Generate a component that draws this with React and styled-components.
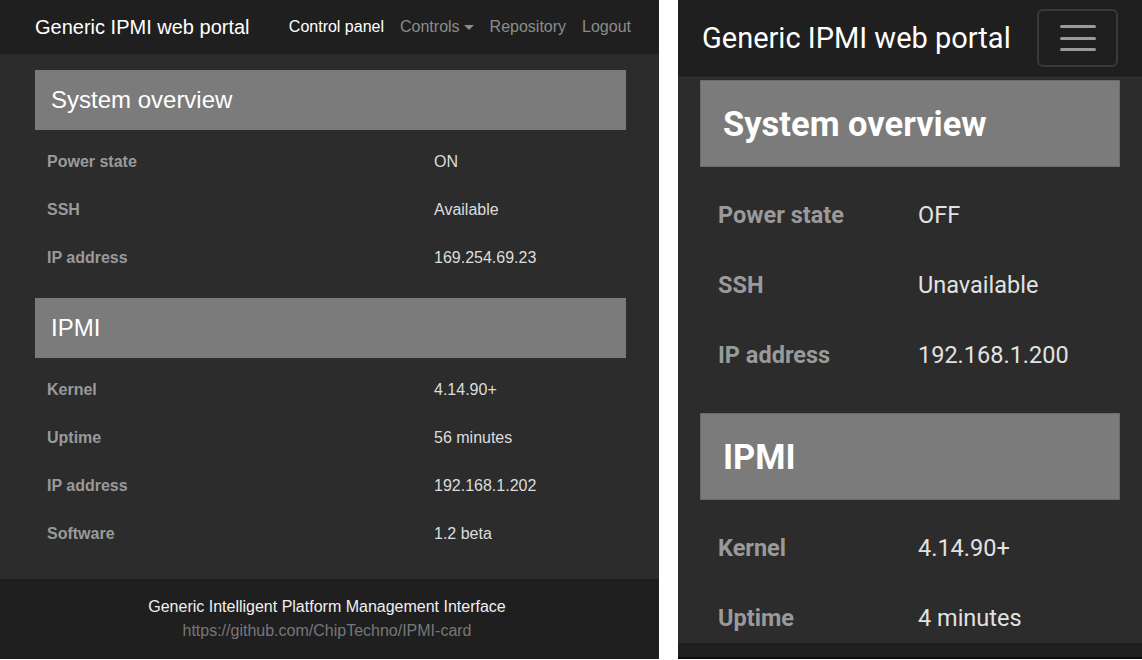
import React from 'react';
import styled, { createGlobalStyle } from 'styled-components';

const GlobalStyle = createGlobalStyle`
  html, body {
    margin: 0;
    padding: 0;
    background: #fff;
  }
  body {
    font-family: "Liberation Sans", Arial, sans-serif;
  }
`;

const systemRows = [
  ['Power state', 'ON'],
  ['SSH', 'Available'],
  ['IP address', '169.254.69.23'],
];

const ipmiRows = [
  ['Kernel', '4.14.90+'],
  ['Uptime', '56 minutes'],
  ['IP address', '192.168.1.202'],
  ['Software', '1.2 beta'],
];

const mobileSystemRows = [
  ['Power state', 'OFF'],
  ['SSH', 'Unavailable'],
  ['IP address', '192.168.1.200'],
];

const mobileIpmiRows = [
  ['Kernel', '4.14.90+'],
  ['Uptime', '4 minutes'],
];

const App = () => {
  return (
    <>
      <GlobalStyle />
      <Page>
        <Desktop>
          <Navbar>
            <Brand>Generic IPMI web portal</Brand>
            <NavLinks>
              <NavLink $active>Control panel</NavLink>
              <NavLink>
                Controls<Caret />
              </NavLink>
              <NavLink>Repository</NavLink>
              <NavLink>Logout</NavLink>
            </NavLinks>
          </Navbar>
          <Main>
            <Section>
              <CardHeader>System overview</CardHeader>
              <Table>
                {systemRows.map(([k, v]) => (
                  <Row key={k}>
                    <Label>{k}</Label>
                    <Value>{v}</Value>
                  </Row>
                ))}
              </Table>
            </Section>
            <Section>
              <CardHeader>IPMI</CardHeader>
              <Table>
                {ipmiRows.map(([k, v]) => (
                  <Row key={k}>
                    <Label>{k}</Label>
                    <Value>{v}</Value>
                  </Row>
                ))}
              </Table>
            </Section>
          </Main>
          <Footer>
            <FooterTitle>Generic Intelligent Platform Management Interface</FooterTitle>
            <FooterLink>https://github.com/ChipTechno/IPMI-card</FooterLink>
          </Footer>
        </Desktop>

        <Mobile>
          <MobileNavbar>
            <MobileBrand>Generic IPMI web portal</MobileBrand>
            <Toggler>
              <TogglerLine />
              <TogglerLine />
              <TogglerLine />
            </Toggler>
          </MobileNavbar>
          <MobileMain>
            <MobileSection>
              <MobileHeader>System overview</MobileHeader>
              <MobileTable>
                {mobileSystemRows.map(([k, v]) => (
                  <MobileRow key={k}>
                    <MobileLabel>{k}</MobileLabel>
                    <MobileValue>{v}</MobileValue>
                  </MobileRow>
                ))}
              </MobileTable>
            </MobileSection>
            <MobileSection>
              <MobileHeader>IPMI</MobileHeader>
              <MobileTable>
                {mobileIpmiRows.map(([k, v]) => (
                  <MobileRow key={k}>
                    <MobileLabel>{k}</MobileLabel>
                    <MobileValue>{v}</MobileValue>
                  </MobileRow>
                ))}
              </MobileTable>
            </MobileSection>
          </MobileMain>
          <MobileFooter />
        </Mobile>
      </Page>
    </>
  );
};

export default App;

const Page = styled.div`
  display: flex;
  gap: 19px;
  width: 1142px;
  height: 660px;
  overflow: hidden;
`;

/* ---------- desktop view ---------- */

const Desktop = styled.div`
  width: 659px;
  height: 659px;
  display: flex;
  flex-direction: column;
  background: #2c2c2c;
`;

const Navbar = styled.nav`
  height: 54px;
  flex-shrink: 0;
  display: flex;
  align-items: center;
  justify-content: space-between;
  padding: 0 28px 0 35px;
  background: #1f1f1f;
`;

const Brand = styled.div`
  color: #fff;
  font-size: 20px;
`;

const NavLinks = styled.div`
  display: flex;
  align-items: center;
  gap: 16px;
`;

const NavLink = styled.span`
  display: flex;
  align-items: center;
  font-size: 16px;
  color: ${(p) => (p.$active ? '#fff' : '#8c8c8c')};
`;

const Caret = styled.span`
  display: inline-block;
  margin-left: 4px;
  width: 0;
  height: 0;
  border-left: 5px solid transparent;
  border-right: 5px solid transparent;
  border-top: 5px solid #8c8c8c;
`;

const Main = styled.main`
  flex: 1;
  padding: 16px 33px 0 35px;
`;

const Section = styled.section`
  margin-bottom: 17px;
`;

const CardHeader = styled.h2`
  margin: 0;
  height: 60px;
  display: flex;
  align-items: center;
  padding: 0 16px;
  background: #7b7b7b;
  color: #fff;
  font-size: 24px;
  font-weight: normal;
`;

const Table = styled.div`
  padding-top: 8px;
  margin-bottom: -1px;
`;

const Row = styled.div`
  display: grid;
  grid-template-columns: 387px 1fr;
  height: 48px;
  align-items: center;
  font-size: 16px;
`;

const Label = styled.div`
  padding: 0 12px;
  color: #9a9a9a;
  font-weight: bold;
`;

const Value = styled.div`
  padding: 0 12px;
  color: #ddd;
`;

const Footer = styled.footer`
  height: 80px;
  flex-shrink: 0;
  box-sizing: border-box;
  padding: 16px 5px 0 0;
  background: #1f1f1f;
  text-align: center;
  font-size: 16px;
  line-height: 24px;
`;

const FooterTitle = styled.div`
  color: #f0f0f0;
`;

const FooterLink = styled.div`
  color: #777;
`;

/* ---------- mobile view ---------- */

const Mobile = styled.div`
  width: 464px;
  height: 659px;
  display: flex;
  flex-direction: column;
  background: #2c2c2c;
  font-family: Roboto, "Noto Sans", sans-serif;
`;

const MobileNavbar = styled.nav`
  height: 78px;
  flex-shrink: 0;
  box-sizing: border-box;
  display: flex;
  align-items: center;
  justify-content: space-between;
  padding: 0 24px 0 24px;
  background: #1f1f1f;
  border-bottom: 1px solid #343434;
`;

const MobileBrand = styled.div`
  color: #fff;
  font-size: 29px;
  margin-top: -2px;
`;

const Toggler = styled.div`
  box-sizing: border-box;
  width: 81px;
  height: 58px;
  margin-top: -1px;
  border: 2px solid #3a3a3a;
  border-radius: 6px;
  display: flex;
  flex-direction: column;
  align-items: center;
  justify-content: center;
  gap: 8.5px;
`;

const TogglerLine = styled.span`
  display: block;
  width: 36px;
  height: 3px;
  border-radius: 2px;
  background: #9a9a9a;
`;

const MobileMain = styled.main`
  flex: 1;
  overflow: hidden;
  padding: 2px 22px 0 22px;
`;

const MobileSection = styled.section`
  margin-bottom: 23px;
`;

const MobileHeader = styled.h2`
  margin: 0;
  height: 87px;
  box-sizing: border-box;
  display: flex;
  align-items: center;
  padding: 0 22px;
  background: #7b7b7b;
  border: 1px solid #6a6a6a;
  color: #fff;
  font-size: 34.5px;
  font-weight: bold;
`;

const MobileTable = styled.div`
  padding-top: 13px;
`;

const MobileRow = styled.div`
  display: grid;
  grid-template-columns: 218px 1fr;
  height: 70px;
  align-items: center;
  font-size: 23.5px;
`;

const MobileLabel = styled.div`
  padding-left: 18px;
  color: #9a9a9a;
  font-weight: bold;
`;

const MobileValue = styled.div`
  color: #e2e2e2;
`;

const MobileFooter = styled.footer`
  height: 14px;
  flex-shrink: 0;
  background: #1f1f1f;
  border-bottom: 2px solid #0c0c0c;
`;
